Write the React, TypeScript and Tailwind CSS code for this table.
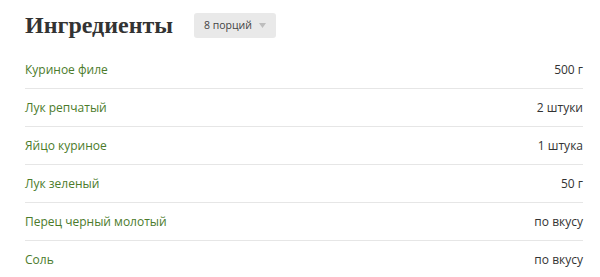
const ingredients = [
  { name: "Куриное филе", amount: "500 г" },
  { name: "Лук репчатый", amount: "2 штуки" },
  { name: "Яйцо куриное", amount: "1 штука" },
  { name: "Лук зеленый", amount: "50 г" },
  { name: "Перец черный молотый", amount: "по вкусу" },
  { name: "Соль", amount: "по вкусу" },
]

export default function App() {
  return (
    <div className="w-[600px] h-[277px] overflow-hidden bg-white pl-[25px] font-['Open_Sans',sans-serif]">
      <div className="w-[558px]">
        <div className="flex items-center h-[51px]">
          <h2 className="font-['Liberation_Serif',serif] font-bold text-[24px] leading-[51px] text-[#333]">
            Ингредиенты
          </h2>
          <button className="ml-[21px] flex items-center h-[25px] w-[82px] pl-[10px] pr-[10px] rounded-[3px] bg-[#e9e9e9] text-[10.5px] text-[#444]">
            <span>8 порций</span>
            <svg className="ml-auto" width="7" height="5" viewBox="0 0 7 5">
              <path d="M0 0h7L3.5 5z" fill="#bdbdbd" />
            </svg>
          </button>
        </div>
        <ul>
          {ingredients.map((item, i) => (
            <li
              key={item.name}
              className={`flex items-center justify-between h-[38px] text-[12px] ${
                i < ingredients.length - 1 ? "border-b border-[#e6e6e6]" : ""
              }`}
            >
              <span className="text-[#4b7b2b]">{item.name}</span>
              <span className="text-[#333]">{item.amount}</span>
            </li>
          ))}
        </ul>
      </div>
    </div>
  )
}
